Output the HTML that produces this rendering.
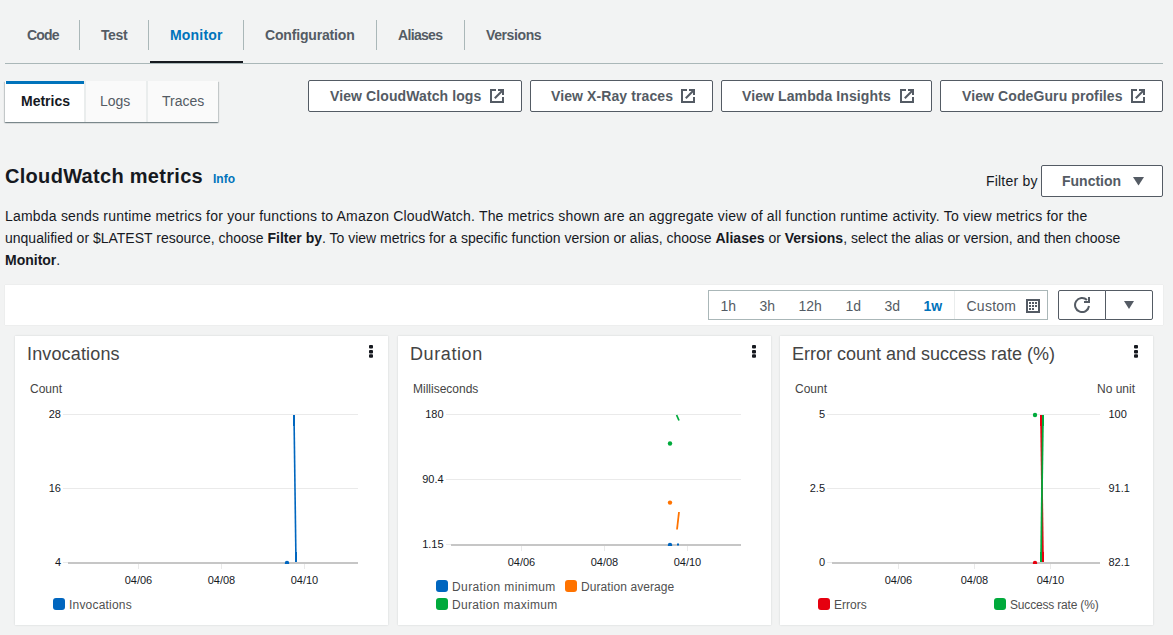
<!DOCTYPE html>
<html><head><meta charset="utf-8">
<style>
html,body{margin:0;padding:0;}
body{width:1173px;height:635px;overflow:hidden;background:#f2f3f3;font-family:"Liberation Sans",sans-serif;color:#16191f;position:relative;}
.t{position:absolute;white-space:nowrap;line-height:1;}
.b{font-weight:bold;}
.tab{font-size:14px;font-weight:bold;color:#545b64;top:28px;}
.vd{position:absolute;width:1px;background:#aab7b8;top:20px;height:30px;}
.btn{position:absolute;top:80px;height:30px;border:1px solid #545b64;border-radius:2px;background:#fff;box-sizing:content-box;}
.btn .t{font-size:14px;font-weight:bold;color:#545b64;top:8px;letter-spacing:0.1px;}
.btn svg{position:absolute;top:8px;}
.card{position:absolute;top:336px;height:289px;background:#fff;box-shadow:0 0 2px 0 rgba(0,28,36,.14);box-sizing:border-box;}
.ct{font-size:18px;color:#444;top:345px;}
.yl{font-size:12px;color:#444;}
.al{font-size:11px;color:#16191f;}
.lg{font-size:12px;color:#505050;}
</style></head><body>

<!-- top tabs -->
<div class="t tab" style="left:27px;letter-spacing:-0.8px">Code</div>
<div class="vd" style="left:79px"></div>
<div class="t tab" style="left:101px;letter-spacing:-0.4px">Test</div>
<div class="vd" style="left:148px"></div>
<div class="t tab" style="left:170px;color:#0073bb;letter-spacing:0.2px">Monitor</div>
<div class="vd" style="left:243px"></div>
<div class="t tab" style="left:265px;letter-spacing:-0.17px">Configuration</div>
<div class="vd" style="left:376px"></div>
<div class="t tab" style="left:398px;letter-spacing:-0.67px">Aliases</div>
<div class="vd" style="left:464px"></div>
<div class="t tab" style="left:486px;letter-spacing:-0.4px">Versions</div>
<div style="position:absolute;left:5px;top:63px;width:1158px;height:1px;background:#aab7b8"></div>
<div style="position:absolute;left:150px;top:61px;width:93px;height:2px;background:#16191f"></div>

<!-- sub tabs -->
<div style="position:absolute;left:5px;top:81px;width:213px;height:41px;background:#fafafa;box-shadow:0 1px 1px 0 rgba(0,28,36,.3),1px 1px 1px 0 rgba(0,28,36,.15),-1px 1px 1px 0 rgba(0,28,36,.15);"></div>
<div style="position:absolute;left:5px;top:81px;width:79px;height:41px;background:#fff"></div>
<div style="position:absolute;left:6px;top:81px;width:78px;height:3px;background:#0073bb"></div>
<div style="position:absolute;left:84px;top:81px;width:2px;height:41px;background:#eaeded"></div>
<div style="position:absolute;left:146px;top:81px;width:2px;height:41px;background:#eaeded"></div>
<div class="t b" style="left:21px;top:94px;font-size:14px">Metrics</div>
<div class="t" style="left:100px;top:94px;font-size:14px;color:#545b64">Logs</div>
<div class="t" style="left:162px;top:94px;font-size:14px;color:#545b64">Traces</div>

<!-- buttons -->
<div class="btn" style="left:308px;width:212px"><div class="t" style="left:21px">View CloudWatch logs</div><svg style="left:181px" width="14" height="14" viewBox="0 0 14 14" fill="none" stroke="#545b64" stroke-width="2"><path d="M6 1H1V13H13V8"/><path d="M8 1H13V6"/><path d="M4.8 9.2L13 1"/></svg></div>
<div class="btn" style="left:530px;width:181px"><div class="t" style="left:20px">View X-Ray traces</div><svg style="left:150px" width="14" height="14" viewBox="0 0 14 14" fill="none" stroke="#545b64" stroke-width="2"><path d="M6 1H1V13H13V8"/><path d="M8 1H13V6"/><path d="M4.8 9.2L13 1"/></svg></div>
<div class="btn" style="left:721px;width:209px"><div class="t" style="left:20px">View Lambda Insights</div><svg style="left:178px" width="14" height="14" viewBox="0 0 14 14" fill="none" stroke="#545b64" stroke-width="2"><path d="M6 1H1V13H13V8"/><path d="M8 1H13V6"/><path d="M4.8 9.2L13 1"/></svg></div>
<div class="btn" style="left:940px;width:221px"><div class="t" style="left:21px">View CodeGuru profiles</div><svg style="left:190px" width="14" height="14" viewBox="0 0 14 14" fill="none" stroke="#545b64" stroke-width="2"><path d="M6 1H1V13H13V8"/><path d="M8 1H13V6"/><path d="M4.8 9.2L13 1"/></svg></div>

<!-- heading -->
<div class="t b" style="left:5px;top:166px;font-size:20px;letter-spacing:0.3px">CloudWatch metrics</div>
<div class="t b" style="left:213px;top:173px;font-size:12px;color:#0073bb">Info</div>
<div class="t" style="left:986px;top:174px;font-size:14px;letter-spacing:0.2px">Filter by</div>
<div style="position:absolute;left:1041px;top:165px;width:120px;height:30px;border:1px solid #545b64;border-radius:2px;background:#fff"></div>
<div class="t b" style="left:1062px;top:174px;font-size:14px;color:#545b64">Function</div>
<svg style="position:absolute;left:1132.5px;top:177px" width="11" height="8.5"><path d="M0 0H11L5.5 8.5Z" fill="#545b64"/></svg>

<!-- paragraph -->
<div class="t" style="left:5px;top:209px;font-size:14px;letter-spacing:0.2px">Lambda sends runtime metrics for your functions to Amazon CloudWatch. The metrics shown are an aggregate view of all function runtime activity. To view metrics for the</div>
<div class="t" style="left:5px;top:231px;font-size:14px;letter-spacing:0px">unqualified or $LATEST resource, choose <b>Filter by</b>. To view metrics for a specific function version or alias, choose <b>Aliases</b> or <b>Versions</b>, select the alias or version, and then choose</div>
<div class="t" style="left:5px;top:253px;font-size:14px"><b>Monitor</b>.</div>

<!-- toolbar panel -->
<div style="position:absolute;left:5px;top:285px;width:1158px;height:40px;background:#fff;box-shadow:0 0 1px 0 rgba(0,28,36,.12)"></div>
<div style="position:absolute;left:708px;top:290px;width:338px;height:28px;border:1px solid #aab7b8;background:#fff"></div>
<div style="position:absolute;left:954px;top:291px;width:1px;height:28px;background:#eaeded"></div>
<div class="t" style="left:720.5px;top:299px;font-size:14px;color:#545b64">1h</div>
<div class="t" style="left:759.5px;top:299px;font-size:14px;color:#545b64">3h</div>
<div class="t" style="left:798.5px;top:299px;font-size:14px;color:#545b64">12h</div>
<div class="t" style="left:845.5px;top:299px;font-size:14px;color:#545b64">1d</div>
<div class="t" style="left:884.5px;top:299px;font-size:14px;color:#545b64">3d</div>
<div class="t b" style="left:923.5px;top:299px;font-size:14px;color:#0073bb">1w</div>
<div class="t" style="left:966.5px;top:299px;font-size:14px;color:#545b64;letter-spacing:0.25px">Custom</div>
<svg style="position:absolute;left:1026px;top:299px" width="14" height="14" viewBox="0 0 14 14"><rect x="1" y="1" width="12" height="12" fill="none" stroke="#545b64" stroke-width="2"/><g fill="#545b64"><rect x="3" y="3" width="2" height="2"/><rect x="6" y="3" width="2" height="2"/><rect x="9" y="3" width="2" height="2"/><rect x="3" y="6" width="2" height="2"/><rect x="6" y="6" width="2" height="2"/><rect x="9" y="6" width="2" height="2"/><rect x="3" y="9" width="2" height="2"/><rect x="6" y="9" width="2" height="2"/></g></svg>
<div style="position:absolute;left:1058px;top:290px;width:46px;height:28px;border:1px solid #545b64;border-radius:2px 0 0 2px;background:#fff"></div>
<div style="position:absolute;left:1105px;top:290px;width:46px;height:28px;border:1px solid #545b64;border-radius:0 2px 2px 0;background:#fff"></div>
<svg style="position:absolute;left:1074px;top:297px" width="16" height="16" viewBox="0 0 16 16" fill="none" stroke="#545b64" stroke-width="2"><path d="M15 9A7 7 0 1 1 12.95 3.05"/><path d="M10 4.9H15V0"/></svg>
<svg style="position:absolute;left:1124px;top:301px" width="10" height="8"><path d="M0 0H10L5 8Z" fill="#545b64"/></svg>

<!-- cards -->
<div class="card" style="left:15px;width:373px"></div>
<div class="card" style="left:398px;width:373px"></div>
<div class="card" style="left:780px;width:373px"></div>

<div class="t ct" style="left:27px;letter-spacing:0.15px">Invocations</div>
<div class="t ct" style="left:410px;letter-spacing:0.6px">Duration</div>
<div class="t ct" style="left:792px">Error count and success rate (%)</div>

<div class="t yl" style="left:30px;top:383px">Count</div>
<div class="t yl" style="left:413px;top:383px">Milliseconds</div>
<div class="t yl" style="left:795px;top:383px">Count</div>
<div class="t yl" style="left:1097px;top:383px">No unit</div>

<!-- y labels -->
<div class="t al" style="left:0;width:61px;text-align:right;top:409px">28</div>
<div class="t al" style="left:0;width:61px;text-align:right;top:483px">16</div>
<div class="t al" style="left:0;width:61px;text-align:right;top:557px">4</div>
<div class="t al" style="left:400.6px;width:43px;text-align:right;top:409px">180</div>
<div class="t al" style="left:400.6px;width:43px;text-align:right;top:474px">90.4</div>
<div class="t al" style="left:400.6px;width:43px;text-align:right;top:539px">1.15</div>
<div class="t al" style="left:781px;width:44px;text-align:right;top:409px">5</div>
<div class="t al" style="left:781px;width:44px;text-align:right;top:483px">2.5</div>
<div class="t al" style="left:781px;width:44px;text-align:right;top:557px">0</div>
<div class="t al" style="left:1108.5px;top:409px">100</div>
<div class="t al" style="left:1108.5px;top:483px">91.1</div>
<div class="t al" style="left:1108.5px;top:557px">82.1</div>

<!-- x labels -->
<div class="t al" style="left:124.7px;top:575px">04/06</div>
<div class="t al" style="left:207.7px;top:575px">04/08</div>
<div class="t al" style="left:290.7px;top:575px">04/10</div>
<div class="t al" style="left:507.7px;top:557px">04/06</div>
<div class="t al" style="left:590.7px;top:557px">04/08</div>
<div class="t al" style="left:673.7px;top:557px">04/10</div>
<div class="t al" style="left:884.7px;top:575px">04/06</div>
<div class="t al" style="left:960.7px;top:575px">04/08</div>
<div class="t al" style="left:1036.7px;top:575px">04/10</div>

<!-- legends -->
<div class="t lg" style="left:69px;top:599px;letter-spacing:0.2px">Invocations</div>
<div class="t lg" style="left:452px;top:581px;letter-spacing:0.4px">Duration minimum</div>
<div class="t lg" style="left:581px;top:581px;letter-spacing:0.08px">Duration average</div>
<div class="t lg" style="left:452px;top:599px;letter-spacing:0.3px">Duration maximum</div>
<div class="t lg" style="left:834px;top:599px">Errors</div>
<div class="t lg" style="left:1010px;top:599px;letter-spacing:-0.18px">Success rate (%)</div>

<svg style="position:absolute;left:0;top:0" width="1173" height="635">
  <g fill="#16191f">
    <rect x="369" y="345" width="4" height="3.5" rx="1"/><rect x="369" y="350" width="4" height="3.5" rx="1"/><rect x="369" y="354.3" width="4" height="3.5" rx="1"/>
    <rect x="752" y="345" width="4" height="3.5" rx="1"/><rect x="752" y="350" width="4" height="3.5" rx="1"/><rect x="752" y="354.3" width="4" height="3.5" rx="1"/>
    <rect x="1134" y="345" width="4" height="3.5" rx="1"/><rect x="1134" y="350" width="4" height="3.5" rx="1"/><rect x="1134" y="354.3" width="4" height="3.5" rx="1"/>
  </g>
  <!-- grids -->
  <g stroke="#eaeaea" stroke-width="1">
    <path d="M63 414.5H358M63 488.5H358M63 562.5H68"/>
    <path d="M446 414.5H741M446 479.5H741M446 544.5H451"/>
    <path d="M827 414.5H1100M827 488.5H1100M827 562.5H832"/>
  </g>
  <g stroke="#e9e9e9" stroke-width="1">
    <path d="M138.5 564V569M221.5 564V569M304.5 564V569"/>
    <path d="M521.5 546V551M604.5 546V551M687.5 546V551"/>
    <path d="M898.5 564V569M974.5 564V569M1050.5 564V569"/>
  </g>
  <!-- data card1 -->
  <g stroke="#0066bf" fill="none">
    <path d="M294 415L296 563" stroke-width="1.6"/>
    <path d="M294 415V426" stroke-width="2"/>
    <path d="M296 552V563" stroke-width="2"/>
  </g>
  <!-- card2 -->
  <path d="M676.6 415L679 420.5" stroke="#00aa3c" stroke-width="1.7"/>
  <circle cx="670" cy="443.5" r="2.2" fill="#00aa3c"/>
  <circle cx="670" cy="502.6" r="2.2" fill="#ff7300"/>
  <path d="M679 512L677 529.5" stroke="#ff7300" stroke-width="1.8"/>
  <!-- card3 -->
  <circle cx="1035" cy="415" r="2.2" fill="#00aa3c"/>
  <g fill="none">
    <path d="M1041 415L1043 563" stroke="#e6000f" stroke-width="1.8"/>
    <path d="M1043 415L1041 563" stroke="#00aa3c" stroke-width="1.8"/>
    <path d="M1041 415V426" stroke="#e6000f" stroke-width="2"/>
    <path d="M1043 415V426" stroke="#00aa3c" stroke-width="2"/>
    <path d="M1041 552V563" stroke="#00aa3c" stroke-width="2"/>
    <path d="M1043 552V563" stroke="#e6000f" stroke-width="2"/>
  </g>
  <!-- axes -->
  <g stroke="#c6c6c6" stroke-width="2">
    <path d="M68 563H358"/>
    <path d="M451 545H741"/>
    <path d="M832 563H1100"/>
  </g>
  <defs><clipPath id="c1"><rect x="0" y="0" width="1173" height="564"/></clipPath><clipPath id="c2"><rect x="0" y="0" width="1173" height="546"/></clipPath></defs>
  <circle cx="287" cy="563" r="2.2" fill="#0066bf" clip-path="url(#c1)"/>
  <circle cx="670" cy="545" r="2.2" fill="#0066bf" clip-path="url(#c2)"/>
  <rect x="677" y="543.5" width="2" height="2" fill="#0066bf"/>
  <circle cx="1035" cy="563" r="2.2" fill="#e6000f" clip-path="url(#c1)"/>
  <!-- legend squares -->
  <rect x="53" y="598" width="12" height="12" rx="3" fill="#0066bf"/>
  <rect x="436" y="580" width="12" height="12" rx="3" fill="#0066bf"/>
  <rect x="565" y="580" width="12" height="12" rx="3" fill="#ff7300"/>
  <rect x="436" y="598" width="12" height="12" rx="3" fill="#00aa3c"/>
  <rect x="818" y="598" width="12" height="12" rx="3" fill="#e6000f"/>
  <rect x="994" y="598" width="12" height="12" rx="3" fill="#00aa3c"/>
</svg>
</body></html>
